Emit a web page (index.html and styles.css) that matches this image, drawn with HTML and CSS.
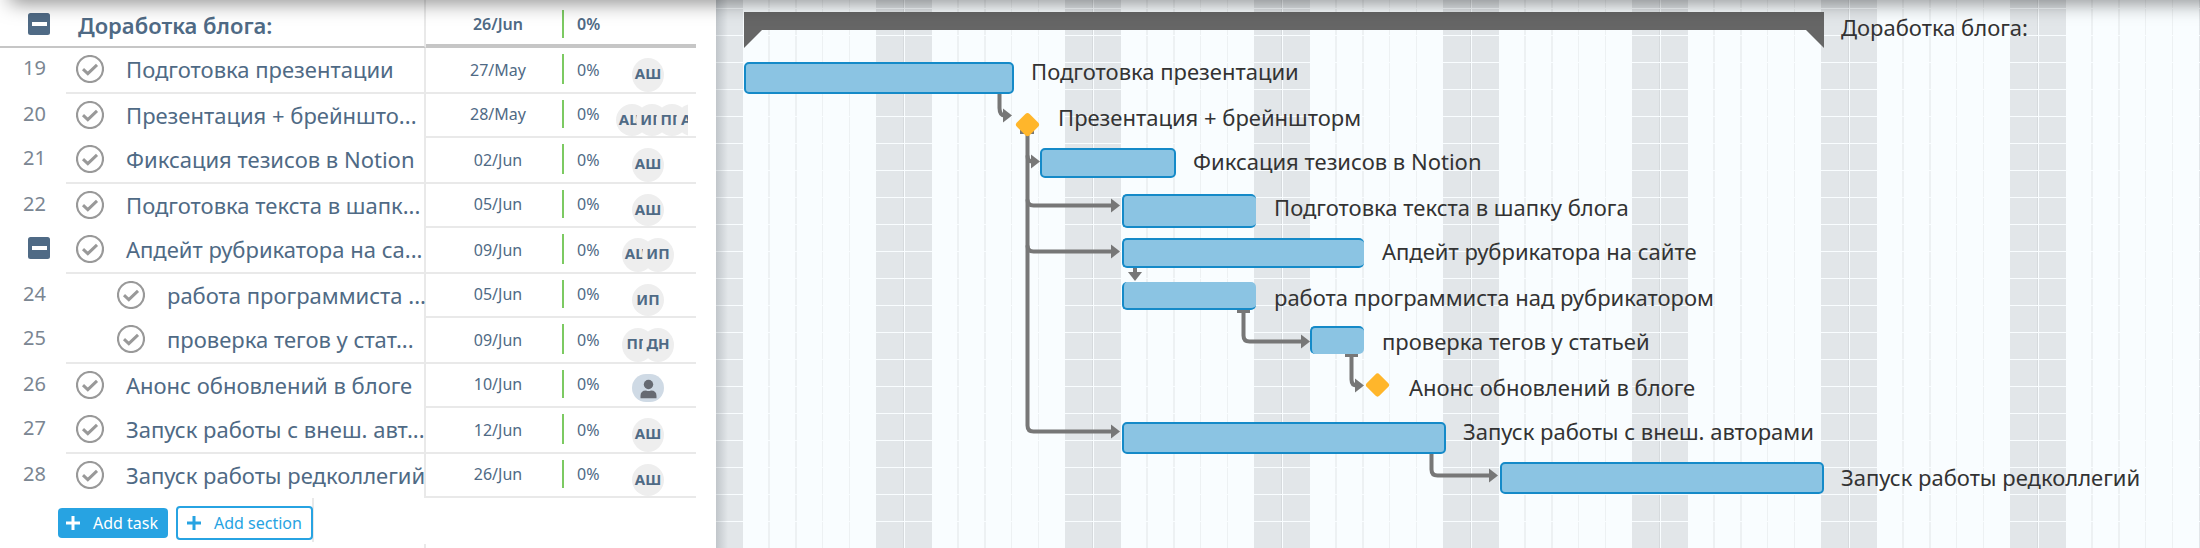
FILE: index.html
```html
<!DOCTYPE html>
<html lang="ru">
<head>
<meta charset="utf-8">
<title>Доработка блога</title>
<link rel="stylesheet" href="styles.css">
</head>
<body>
<svg class="defs" aria-hidden="true">
  <symbol id="check" viewBox="0 0 28 28"><circle cx="14" cy="14" r="13" fill="none" stroke="#999" stroke-width="2.2"/><path d="M7 14.2 11.8 18.6 21 9.8" fill="none" stroke="#999" stroke-width="3"/></symbol>
  <symbol id="minus" viewBox="0 0 22 22"><rect width="22" height="22" rx="2.5" fill="#4f6a85"/><rect x="4" y="9" width="15" height="4" fill="#fff"/></symbol>
  <symbol id="plus" viewBox="0 0 14 14"><path d="M7 0V14M0 7H14" fill="none" stroke="currentColor" stroke-width="3"/></symbol>
</svg>
<main class="app">
  <section class="panel">
    <table class="tasks">
      <colgroup><col class="c-num"><col class="c-name"><col class="c-date"><col class="c-done"><col class="c-people"></colgroup>
      <thead>
        <tr>
          <th class="num"><button class="icon fold" aria-label="Collapse"><svg><use href="#minus"/></svg></button></th>
          <th class="name"><span class="title">Доработка блога:</span></th>
          <th class="date">26/Jun</th>
          <th class="done"><span class="bar-left">0%</span></th>
          <th class="people"></th>
        </tr>
      </thead>
      <tbody>
        <tr><td class="num">19</td><td class="name"><div class="entry"><button class="icon tick" aria-label="Done"><svg><use href="#check"/></svg></button><span class="text">Подготовка презентации</span></div></td><td class="date">27/May</td><td class="done"><span class="bar-left">0%</span></td><td class="people"><div class="group"><span class="avatar">АШ</span></div></td></tr>
        <tr><td class="num">20</td><td class="name"><div class="entry"><button class="icon tick" aria-label="Done"><svg><use href="#check"/></svg></button><span class="text">Презентация + брейншто...</span></div></td><td class="date">28/May</td><td class="done"><span class="bar-left">0%</span></td><td class="people"><div class="group crowded"><span class="avatar">АШ</span><span class="avatar">ИП</span><span class="avatar">ПП</span><span class="avatar">АП</span></div></td></tr>
        <tr><td class="num">21</td><td class="name"><div class="entry"><button class="icon tick" aria-label="Done"><svg><use href="#check"/></svg></button><span class="text">Фиксация тезисов в Notion</span></div></td><td class="date">02/Jun</td><td class="done"><span class="bar-left">0%</span></td><td class="people"><div class="group"><span class="avatar">АШ</span></div></td></tr>
        <tr><td class="num">22</td><td class="name"><div class="entry"><button class="icon tick" aria-label="Done"><svg><use href="#check"/></svg></button><span class="text">Подготовка текста в шапк...</span></div></td><td class="date">05/Jun</td><td class="done"><span class="bar-left">0%</span></td><td class="people"><div class="group"><span class="avatar">АШ</span></div></td></tr>
        <tr><td class="num"><button class="icon fold" aria-label="Collapse"><svg><use href="#minus"/></svg></button></td><td class="name"><div class="entry"><button class="icon tick" aria-label="Done"><svg><use href="#check"/></svg></button><span class="text">Апдейт рубрикатора на са...</span></div></td><td class="date">09/Jun</td><td class="done"><span class="bar-left">0%</span></td><td class="people"><div class="group"><span class="avatar">АШ</span><span class="avatar">ИП</span></div></td></tr>
        <tr><td class="num">24</td><td class="name"><div class="entry nested"><button class="icon tick" aria-label="Done"><svg><use href="#check"/></svg></button><span class="text">работа программиста ...</span></div></td><td class="date">05/Jun</td><td class="done"><span class="bar-left">0%</span></td><td class="people"><div class="group"><span class="avatar">ИП</span></div></td></tr>
        <tr><td class="num">25</td><td class="name"><div class="entry nested"><button class="icon tick" aria-label="Done"><svg><use href="#check"/></svg></button><span class="text">проверка тегов у стат...</span></div></td><td class="date">09/Jun</td><td class="done"><span class="bar-left">0%</span></td><td class="people"><div class="group"><span class="avatar">ПП</span><span class="avatar">ДН</span></div></td></tr>
        <tr><td class="num">26</td><td class="name"><div class="entry"><button class="icon tick" aria-label="Done"><svg><use href="#check"/></svg></button><span class="text">Анонс обновлений в блоге</span></div></td><td class="date">10/Jun</td><td class="done"><span class="bar-left">0%</span></td><td class="people"><div class="group"><svg class="person" viewBox="0 0 32 28"><rect width="32" height="28" rx="14" fill="#cfdae5"/><circle cx="16.500" cy="10.500" r="4.700" fill="#666a72"/><path d="M8.500 24.300V22Q8.500 16.500 14 16.500Q16.500 17.600 19 16.500Q24.500 16.500 24.500 22V24.300Z" fill="#666a72"/></svg></div></td></tr>
        <tr><td class="num">27</td><td class="name"><div class="entry"><button class="icon tick" aria-label="Done"><svg><use href="#check"/></svg></button><span class="text">Запуск работы с внеш. авт...</span></div></td><td class="date">12/Jun</td><td class="done"><span class="bar-left">0%</span></td><td class="people"><div class="group"><span class="avatar">АШ</span></div></td></tr>
        <tr><td class="num">28</td><td class="name"><div class="entry"><button class="icon tick" aria-label="Done"><svg><use href="#check"/></svg></button><span class="text">Запуск работы редколлегий</span></div></td><td class="date">26/Jun</td><td class="done"><span class="bar-left">0%</span></td><td class="people"><div class="group"><span class="avatar">АШ</span></div></td></tr>
      </tbody>
    </table>
    <div class="actions">
      <button class="add solid"><svg><use href="#plus"/></svg>Add task</button>
      <button class="add outline"><svg><use href="#plus"/></svg>Add section</button>
    </div>
    <div class="rest"></div>
  </section>

  <section class="chart">
    <svg class="links" aria-hidden="true">
      <g transform="translate(-716 0)">
        <path class="summary" d="M744 12H1824V48L1806 30H762L744 48Z"/>
        <g class="line">
          <path d="M999.500 94V108Q999.500 115.500 1005 115.500"/>
          <path d="M1027.500 130V425.500Q1027.500 431.500 1033.500 431.500H1112"/>
          <path d="M1027.500 155.500Q1027.500 161.500 1032 161.500"/>
          <path d="M1027.500 199.500Q1027.500 205.500 1033.500 205.500H1112"/>
          <path d="M1027.500 245.500Q1027.500 251.500 1033.500 251.500H1112"/>
          <path d="M1135 268V274"/>
          <path d="M1243.500 311V335.500Q1243.500 341.500 1249.500 341.500H1302"/>
          <path d="M1351.500 355V379.500Q1351.500 385.500 1357 385.500"/>
          <path d="M1431.500 454V469.500Q1431.500 475.500 1437.500 475.500H1490"/>
        </g>
        <g class="head">
          <path d="M1003 108.500 1012 115.500 1003 122.500Z"/>
          <path d="M1031 154.500 1040 161.500 1031 168.500Z"/>
          <path d="M1111 198.500 1120 205.500 1111 212.500Z"/>
          <path d="M1111 244.500 1120 251.500 1111 258.500Z"/>
          <path d="M1111 424.500 1120 431.500 1111 438.500Z"/>
          <path d="M1128 272H1142L1135 281Z"/>
          <path d="M1301 334.500 1310 341.500 1301 348.500Z"/>
          <path d="M1355 378.500 1364 385.500 1355 392.500Z"/>
          <path d="M1489 468.500 1498 475.500 1489 482.500Z"/>
          <path d="M1020 130H1034V134H1020ZM1237 310H1250V313H1237ZM1345 354H1358V357H1345Z"/>
        </g>
        <g class="milestones">
          <rect x="1018.500" y="115.700" width="18" height="18" rx="3" transform="rotate(45 1027.500 124.700)"/>
          <rect x="1368.500" y="376" width="18" height="18" rx="3" transform="rotate(45 1377.500 385)"/>
        </g>
      </g>
    </svg>
    <div class="bar" style="left:28px;top:62px;width:270px;height:32px"></div>
    <div class="bar" style="left:324px;top:148px;width:136px;height:30px"></div>
    <div class="bar open-right" style="left:406px;top:194px;width:134px;height:34px"></div>
    <div class="bar open-right" style="left:406px;top:238px;width:242px;height:30px"></div>
    <div class="bar open-right open-top" style="left:406px;top:282px;width:134px;height:28px"></div>
    <div class="bar open-right open-bottom" style="left:594px;top:326px;width:54px;height:28px"></div>
    <div class="bar" style="left:406px;top:422px;width:324px;height:32px"></div>
    <div class="bar" style="left:784px;top:462px;width:324px;height:32px"></div>

    <span class="label" style="left:1125px;top:12px">Доработка блога:</span>
    <span class="label" style="left:315px;top:56px">Подготовка презентации</span>
    <span class="label" style="left:342px;top:102px">Презентация + брейншторм</span>
    <span class="label" style="left:477px;top:146px">Фиксация тезисов в Notion</span>
    <span class="label" style="left:558px;top:192px">Подготовка текста в шапку блога</span>
    <span class="label" style="left:666px;top:236px">Апдейт рубрикатора на сайте</span>
    <span class="label" style="left:558px;top:282px">работа программиста над рубрикатором</span>
    <span class="label" style="left:666px;top:326px">проверка тегов у статьей</span>
    <span class="label" style="left:693px;top:372px">Анонс обновлений в блоге</span>
    <span class="label" style="left:747px;top:416px">Запуск работы с внеш. авторами</span>
    <span class="label" style="left:1125px;top:462px">Запуск работы редколлегий</span>
  </section>
  <div class="top-shade"></div>
</main>
</body>
</html>
```
FILE: styles.css
```css
* { box-sizing: border-box; }

body {
  margin: 0;
  font-family: "Noto Sans", "Open Sans", sans-serif;
  color: #4f6a85;
  background: #fff;
}

button {
  margin: 0;
  padding: 0;
  border: 0;
  background: none;
  font: inherit;
  cursor: pointer;
}

.defs { position: absolute; width: 0; height: 0; }

.app {
  position: relative;
  display: flex;
  min-height: 100vh;
  overflow: hidden;
}

.panel {
  display: flex;
  flex-direction: column;
  flex: none;
  padding-right: 20px;
}

.tasks {
  width: 696px;
  table-layout: fixed;
  border-collapse: separate;
  border-spacing: 0;
}

.c-num { width: 66px; }
.c-name { width: 360px; }
.c-date { width: 136px; }
.c-done { width: 46px; }
.c-people { width: 88px; }

th, td { padding: 0; vertical-align: top; text-align: left; }
thead tr { height: 48px; }
tbody tr { height: 46px; }
tbody tr:nth-child(even) { height: 44px; }

/* separators */
th.num, th.name { border-bottom: 2px solid #c6c6c6; }
th.date, th.done, th.people { border-bottom: 4px solid #c6c6c6; }
.name { border-right: 2px solid #e9e9e9; }
td.date, td.done, td.people { border-bottom: 2px solid #e9e9e9; }
tbody tr:nth-child(odd) .name { border-bottom: 2px solid #e9e9e9; }

.num {
  padding: 6px 0 0 23px;
  font-size: 20px;
  line-height: 28px;
  color: #7b8692;
}

.icon { display: block; }
.icon svg { display: block; width: 100%; height: 100%; }
.fold { width: 22px; height: 22px; margin: 3px 0 0 5px; }
th .fold { margin-top: 7px; }
.tick { flex: none; width: 28px; height: 28px; }

.title {
  display: block;
  padding: 10px 0 0 12px;
  font-size: 22px;
  font-weight: 600;
  line-height: 30px;
}

.entry {
  display: flex;
  align-items: center;
  gap: 22px;
  padding: 6px 0 0 10px;
  font-size: 22px;
  line-height: 30px;
}

.nested { padding-left: 51px; }
.text { white-space: nowrap; }

.date {
  padding: 10px 0 0 8px;
  font-size: 16px;
  line-height: 24px;
  text-align: center;
}

.done { padding-top: 6px; font-size: 16px; }
th.date { padding-top: 12px; font-weight: 600; }
th.done { padding-top: 10px; font-weight: 600; }
tbody tr:nth-child(even) .date { padding-top: 8px; }

.bar-left {
  display: block;
  height: 30px;
  padding-left: 13px;
  border-left: 2px solid #7cca62;
  line-height: 32px;
}

th .bar-left,
tr:nth-child(even) .bar-left { height: 28px; line-height: 28px; }

.group {
  display: flex;
  justify-content: center;
  width: 80px;
  padding-top: 10px;
  overflow: hidden;
}

.crowded { justify-content: flex-start; padding-left: 8px; }

.avatar {
  flex: none;
  width: 32px;
  height: 34px;
  border-radius: 50%;
  background: #eee;
  font-size: 15px;
  font-weight: 700;
  line-height: 30px;
  text-align: center;
}

tr:nth-child(even) .avatar { height: 32px; }
.avatar + .avatar { margin-left: -12px; }
.person { width: 32px; height: 28px; }

.actions {
  display: flex;
  align-items: center;
  gap: 8px;
  width: 314px;
  height: 44px;
  padding: 6px 0 0 58px;
  border-right: 2px solid #e9e9e9;
}

.add {
  display: flex;
  align-items: center;
  gap: 13px;
  border-radius: 4px;
  font-size: 16px;
  line-height: 30px;
  white-space: nowrap;
}

.add svg { width: 14px; height: 14px; }
.solid { padding: 0 10px 0 8px; background: #27a3e2; color: #fff; }
.outline { padding: 0 9px; border: 2px solid #27a3e2; color: #27a3e2; }

.rest {
  flex: 1;
  width: 426px;
  margin-top: 2px;
  border-right: 2px solid #e9e9e9;
}

/* day columns repeat weekly, 27px a day */
.chart {
  position: relative;
  flex: 1;
  overflow: hidden;
  background-color: #f9fdff;
  background-image:
    linear-gradient(to right, rgba(60, 70, 80, .2), rgba(60, 70, 80, 0) 12px),
    linear-gradient(#f9fdff 1px, transparent 1px),
    linear-gradient(to right,
      #e2e6e9 27px, #f9fdff 27px, #f9fdff 52px,
      #edf1f3 52px, #edf1f3 54px, #f9fdff 54px, #f9fdff 79px,
      #edf1f3 79px, #edf1f3 81px, #f9fdff 81px, #f9fdff 106px,
      #edf1f3 106px, #edf1f3 107px, #f9fdff 107px, #f9fdff 133px,
      #edf1f3 133px, #edf1f3 134px, #f9fdff 134px, #f9fdff 160px,
      #e2e6e9 160px, #e2e6e9 187px, #d6dadd 187px, #d6dadd 188px,
      #f9fdff 188px, #f9fdff 189px);
  background-size: 100% 100%, 100% 27px, 189px 100%;
  background-position: 0 0, 0 8px, 0 0;
  background-repeat: no-repeat, repeat, repeat;
}

.links {
  position: absolute;
  inset: 0;
  width: 100%;
  height: 100%;
  overflow: visible;
}

.summary { fill: #666; }
.line { fill: none; stroke: #777; stroke-width: 4; }
.head { fill: #777; }
.milestones { fill: #ffb62b; }

.bar {
  position: absolute;
  border: 2px solid #158ac8;
  border-radius: 5px;
  background: #8bc4e3;
}

.open-right { border-right: 0; }
.open-top { border-top: 0; }
.open-bottom { border-bottom: 0; }

.label {
  position: absolute;
  font-size: 22px;
  line-height: 30px;
  color: #333;
  white-space: nowrap;
}

.top-shade {
  position: absolute;
  top: -20px;
  left: 10px;
  right: -20px;
  height: 20px;
  box-shadow: 0 2px 20px rgba(0, 0, 0, .5);
  pointer-events: none;
}
```
